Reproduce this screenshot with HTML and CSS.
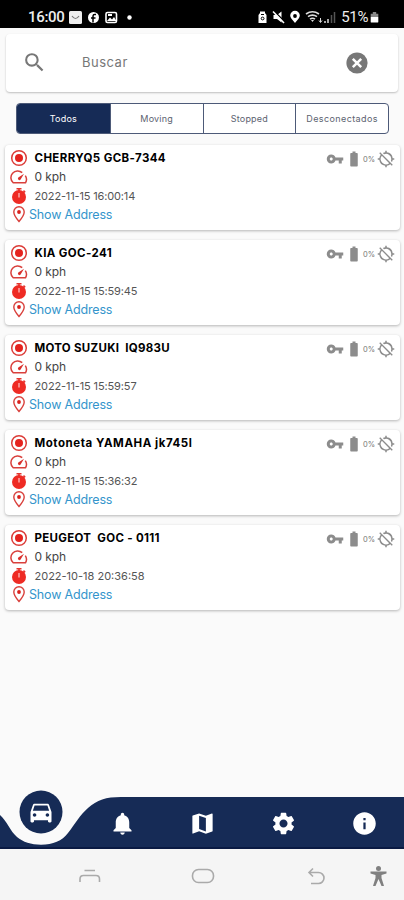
FILE: index.html
```
<!DOCTYPE html>
<html lang="es">
<head>
<meta charset="utf-8">
<title>Vehículos</title>
<link rel="stylesheet" href="styles.css">
</head>
<body>
<svg class="defs" width="0" height="0" aria-hidden="true">
  <symbol id="target" viewBox="0 0 18 18"><circle cx="9" cy="9" r="7.300" fill="none" stroke="#dc3d39" stroke-width="1.500"/><circle cx="9" cy="9" r="4" fill="#e5231e"/></symbol>
  <symbol id="speed" viewBox="0 0 18 18"><path d="M12.200 4.600A6.800 6.800 0 0 0 3.200 14.800H15.500A6.800 6.800 0 0 0 15.300 7.600" fill="none" stroke="#d9403c" stroke-width="1.500" stroke-linejoin="round"/><path d="M14 5.800 10.600 11.600a1.500 1.500 0 1 1-2.300-2z" fill="#d9302c"/></symbol>
  <symbol id="timer" viewBox="0 0 18 18"><path d="M6.500 1h5v1.600h-5zM8.200 2h1.600v2H8.200zM14 3l1.700 1.700-1.200 1.200-1.600-1.600z" fill="#e5352f"/><circle cx="9" cy="10" r="7" fill="#ee2b24"/><path d="M9 6v4.500" stroke="#fbb" stroke-width="1.300"/></symbol>
  <symbol id="pin" viewBox="0 0 18 18"><path d="M9 16.500C6 13 3.800 10 3.800 7a5.200 5.200 0 0 1 10.400 0c0 3-2.200 6-5.200 9.500z" fill="none" stroke="#d9403c" stroke-width="1.400"/><circle cx="9" cy="7" r="1.900" fill="#d9201c"/></symbol>
  <symbol id="key" viewBox="0 0 24 24"><path d="M12.650 10C11.830 7.670 9.610 6 7 6c-3.310 0-6 2.690-6 6s2.690 6 6 6c2.610 0 4.830-1.670 5.650-4H17v4h4v-4h2v-4H12.650zM7 14c-1.100 0-2-.9-2-2s.9-2 2-2 2 .9 2 2-.9 2-2 2z"/></symbol>
  <symbol id="battery" viewBox="0 0 24 24"><path d="M15.670 4H14V2h-4v2H8.330C7.600 4 7 4.600 7 5.330v15.330C7 21.400 7.600 22 8.330 22h7.330c.74 0 1.340-.6 1.340-1.330V5.330C17 4.600 16.400 4 15.670 4z"/></symbol>
  <symbol id="nogps" viewBox="0 0 24 24"><path d="M20.940 11A8.994 8.994 0 0 0 13 3.060V1h-2v2.060c-1.130.12-2.190.46-3.160.97l1.500 1.500A6.995 6.995 0 0 1 19 12c0 .94-.19 1.840-.52 2.650l1.500 1.500c.5-.96.840-2.020.97-3.150H23v-2h-2.060zM3 4.270l2.040 2.040A8.914 8.914 0 0 0 3.060 11H1v2h2.060A8.994 8.994 0 0 0 11 20.940V23h2v-2.060c1.770-.2 3.380-.91 4.690-1.980L19.730 21 21 19.730 4.270 3 3 4.270zm13.270 13.270A6.995 6.995 0 0 1 6.460 7.730l9.810 9.810z"/></symbol>
</svg>

<header class="status">
  <span class="clock">16:00</span>
  <svg class="status-left" width="70" height="16" viewBox="0 0 70 16">
    <rect x="1" y="2" width="13" height="13" rx="1.500" fill="#eee"/><path d="M4 7q3.500 5 7 0" fill="none" stroke="#777" stroke-width="1.200"/>
    <circle cx="25.500" cy="8.500" r="5.500" fill="#fff"/><path d="M28 5.500q-3-.6-3 2v6M23 9h4.500" fill="none" stroke="#000" stroke-width="1.500"/>
    <rect x="38" y="3.500" width="10.500" height="10" rx="1.500" fill="none" stroke="#fff" stroke-width="1.600"/><path d="M39 12l3-3.500 2 2 2-2.500 2.500 4zM40 5h4v2h-4z" fill="#fff"/>
    <circle cx="61.500" cy="8.500" r="2.200" fill="#fff"/>
  </svg>
  <svg class="status-right" width="80" height="16" viewBox="0 0 80 16">
    <path d="M1.500 6 3 4V2.500h5V4l1.500 2V14h-8z" fill="#fff"/><path d="M4 5.500h3M4.200 9.500a1.400 1.400 0 1 0 2.800 0 1.400 1.400 0 0 0-2.800 0" fill="none" stroke="#000"/>
    <path d="M16.500 6h3.500l4.500-3.500v11L20 10h-3.500z" fill="#fff"/><path d="M17 2l11 11" stroke="#000" stroke-width="1.500"/><path d="M16 2.500l11 11.500" stroke="#fff" stroke-width="1.600"/>
    <path d="M38 14c-3-3.500-4.800-5.200-4.800-7.400a4.800 4.800 0 0 1 9.600 0C42.800 8.800 41 10.500 38 14z" fill="#fff"/><circle cx="38" cy="7" r="1.900" fill="#000"/>
    <path d="M49 5q6.500-4.500 13 0M51 7.700q4.500-3.200 9 0M53 10.200q2.500-2 5 0" fill="none" stroke="#ddd" stroke-width="1.600"/><path d="M54 11h3l-1.500 2z" fill="#ddd"/>
    <path d="M63.500 9v4M62 11.500l1.500 2 1.500-2" stroke="#ddd" fill="none"/><path d="M68 12v2M71 10v4" stroke="#ddd" stroke-width="1.500"/><path d="M74.500 6v8M77.500 3v11" stroke="#555" stroke-width="1.500"/>
  </svg>
  <span class="percent">51%</span>
  <svg class="status-batt" width="9" height="11" viewBox="0 0 9 13"><path d="M2.500 0h4v2H9v4H0V2h2.500z" fill="#888"/><path d="M0 6h9v5.500a1 1 0 0 1-1 1H1a1 1 0 0 1-1-1z" fill="#fff"/></svg>
</header>

<main>
  <section class="search">
    <svg class="search-icon" width="25" height="25" viewBox="0 0 24 24"><path fill="#777" d="M15.500 14h-.79l-.28-.27A6.471 6.471 0 0 0 16 9.500 6.500 6.500 0 1 0 9.500 16c1.610 0 3.090-.59 4.230-1.570l.27.28v.79l5 4.990L20.490 19l-4.990-5zm-6 0C7.010 14 5 11.990 5 9.500S7.010 5 9.500 5 14 7.010 14 9.500 11.990 14 9.500 14z"/></svg>
    <span class="placeholder">Buscar</span>
    <svg class="clear" width="22" height="22" viewBox="0 0 22 22"><circle cx="11" cy="11" r="10.600" fill="#777"/><path d="M6.800 6.800l8.400 8.400M15.200 6.800l-8.400 8.400" stroke="#fff" stroke-width="2.500"/></svg>
  </section>

  <nav class="tabs">
    <span class="tab active">Todos</span><span class="tab">Moving</span><span class="tab">Stopped</span><span class="tab long">Desconectados</span>
  </nav>

  <section class="list">
    <article class="card">
      <div class="info">
        <div class="row name n1"><svg><use href="#target"/></svg><b>CHERRYQ5 GCB-7344</b></div>
        <div class="row kph"><svg><use href="#speed"/></svg><span>0 kph</span></div>
        <div class="row date"><svg><use href="#timer"/></svg><span>2022-11-15 16:00:14</span></div>
        <div class="row addr"><svg><use href="#pin"/></svg><a>Show Address</a></div>
      </div>
      <div class="state"><svg class="key"><use href="#key"/></svg><svg class="battery"><use href="#battery"/></svg><span>0%</span><svg class="gps"><use href="#nogps"/></svg></div>
    </article>
    <article class="card">
      <div class="info">
        <div class="row name n2"><svg><use href="#target"/></svg><b>KIA GOC-241</b></div>
        <div class="row kph"><svg><use href="#speed"/></svg><span>0 kph</span></div>
        <div class="row date d2"><svg><use href="#timer"/></svg><span>2022-11-15 15:59:45</span></div>
        <div class="row addr"><svg><use href="#pin"/></svg><a>Show Address</a></div>
      </div>
      <div class="state"><svg class="key"><use href="#key"/></svg><svg class="battery"><use href="#battery"/></svg><span>0%</span><svg class="gps"><use href="#nogps"/></svg></div>
    </article>
    <article class="card">
      <div class="info">
        <div class="row name n3"><svg><use href="#target"/></svg><b>MOTO SUZUKI  IQ983U</b></div>
        <div class="row kph"><svg><use href="#speed"/></svg><span>0 kph</span></div>
        <div class="row date d2"><svg><use href="#timer"/></svg><span>2022-11-15 15:59:57</span></div>
        <div class="row addr"><svg><use href="#pin"/></svg><a>Show Address</a></div>
      </div>
      <div class="state"><svg class="key"><use href="#key"/></svg><svg class="battery"><use href="#battery"/></svg><span>0%</span><svg class="gps"><use href="#nogps"/></svg></div>
    </article>
    <article class="card">
      <div class="info">
        <div class="row name n4"><svg><use href="#target"/></svg><b>Motoneta YAMAHA jk745l</b></div>
        <div class="row kph"><svg><use href="#speed"/></svg><span>0 kph</span></div>
        <div class="row date d2"><svg><use href="#timer"/></svg><span>2022-11-15 15:36:32</span></div>
        <div class="row addr"><svg><use href="#pin"/></svg><a>Show Address</a></div>
      </div>
      <div class="state"><svg class="key"><use href="#key"/></svg><svg class="battery"><use href="#battery"/></svg><span>0%</span><svg class="gps"><use href="#nogps"/></svg></div>
    </article>
    <article class="card">
      <div class="info">
        <div class="row name n5"><svg><use href="#target"/></svg><b>PEUGEOT  GOC - 0111</b></div>
        <div class="row kph"><svg><use href="#speed"/></svg><span>0 kph</span></div>
        <div class="row date d5"><svg><use href="#timer"/></svg><span>2022-10-18 20:36:58</span></div>
        <div class="row addr"><svg><use href="#pin"/></svg><a>Show Address</a></div>
      </div>
      <div class="state"><svg class="key"><use href="#key"/></svg><svg class="battery"><use href="#battery"/></svg><span>0%</span><svg class="gps"><use href="#nogps"/></svg></div>
    </article>
  </section>
</main>

<nav class="bottom">
  <svg class="wave" width="404" height="62" viewBox="0 0 404 62">
    <path d="M0 28C7 34 10 44 17 50C23 55 31 57.700 41 57.700C53 57.700 62 54 68 46C75 37 80 28 88 21C97 13 106 10 121 10H404V62H0z" fill="#162b56"/>
    <path d="M0 61H404" stroke="#0a1a43" stroke-width="2"/>
    <circle cx="41" cy="25" r="21.500" fill="#162b56"/>
  </svg>
  <div class="items">
    <span class="item lifted"><svg width="28" height="28" viewBox="0 0 24 24"><path d="M18.920 6.010C18.720 5.420 18.160 5 17.500 5h-11c-.66 0-1.210.42-1.420 1.010L3 12v8c0 .55.450 1 1 1h1c.55 0 1-.45 1-1v-1h12v1c0 .55.450 1 1 1h1c.55 0 1-.45 1-1v-8l-2.080-5.990zM6.500 16c-.83 0-1.500-.67-1.500-1.500S5.670 13 6.500 13s1.500.67 1.500 1.500S7.330 16 6.500 16zm11 0c-.83 0-1.500-.67-1.500-1.500s.67-1.500 1.500-1.500 1.500.67 1.500 1.500-.67 1.500-1.500 1.500zM5 11l1.500-4.500h11L19 11H5z"/></svg></span>
    <span class="item"><svg width="27" height="27" viewBox="0 0 24 24"><path d="M12 22c1.100 0 2-.9 2-2h-4c0 1.100.89 2 2 2zm6-6v-5c0-3.070-1.640-5.640-4.500-6.320V4c0-.83-.67-1.500-1.500-1.500s-1.500.67-1.500 1.500v.68C7.630 5.360 6 7.920 6 11v5l-2 2v1h16v-1l-2-2z"/></svg></span>
    <span class="item"><svg width="27" height="27" viewBox="0 0 24 24"><path d="M20.500 3l-.16.030L15 5.100 9 3 3.360 4.900c-.21.070-.36.250-.36.480V20.500c0 .28.220.5.500.5l.16-.03L9 18.900l6 2.100 5.640-1.900c.21-.07.360-.25.360-.48V3.500c0-.28-.22-.5-.5-.5zM15 19l-6-2.110V5l6 2.110V19z"/></svg></span>
    <span class="item"><svg width="27" height="27" viewBox="0 0 24 24"><path d="M19.140 12.940c.04-.3.060-.61.060-.94 0-.32-.02-.64-.07-.94l2.030-1.580a.49.490 0 0 0 .12-.61l-1.920-3.320a.488.488 0 0 0-.59-.22l-2.390.96c-.5-.38-1.030-.7-1.620-.94l-.36-2.540a.484.484 0 0 0-.48-.41h-3.840c-.24 0-.43.170-.47.410l-.36 2.540c-.59.240-1.130.57-1.620.94l-2.390-.96c-.22-.08-.47 0-.59.220L2.740 8.870c-.12.210-.08.470.12.610l2.030 1.580c-.05.300-.09.630-.09.940s.020.640.070.940l-2.030 1.580a.49.490 0 0 0-.12.610l1.920 3.320c.12.220.37.290.59.220l2.390-.96c.5.380 1.030.7 1.620.940l.36 2.540c.05.240.24.410.48.410h3.840c.24 0 .44-.17.470-.41l.36-2.540c.59-.24 1.130-.56 1.620-.94l2.390.96c.22.080.47 0 .59-.22l1.920-3.320c.12-.22.070-.47-.12-.61l-2.010-1.580zM12 15.600c-1.980 0-3.600-1.620-3.600-3.600s1.620-3.600 3.600-3.600 3.600 1.620 3.600 3.600-1.620 3.600-3.600 3.600z"/></svg></span>
    <span class="item"><svg width="27" height="27" viewBox="0 0 24 24"><path d="M12 2C6.480 2 2 6.480 2 12s4.480 10 10 10 10-4.480 10-10S17.520 2 12 2zm1 15h-2v-6h2v6zm0-8h-2V7h2v2z"/></svg></span>
  </div>
</nav>

<footer class="system">
  <svg width="404" height="51" viewBox="0 0 404 51" fill="none" stroke="#aaa" stroke-width="1.600">
    <path d="M84.500 21.500H95M80 33v-3q0-3.500 3.500-3.500h12.500q3.500 0 3.500 3.500v3"/>
    <rect x="192.500" y="20.500" width="21" height="13" rx="6"/>
    <path d="M309 23.500h9.500a5 5 0 0 1 0 11H311M313 19.500l-4 4 4 4"/>
    <g fill="#808080" stroke="none"><circle cx="378.500" cy="19.500" r="2.500"/><path d="M370.500 22.500h16v2l-5 1.500v3l2.500 8h-2.500l-3-7-3 7H373l2.500-8v-3l-5-1.500z"/></g>
  </svg>
</footer>
</body>
</html>
```

FILE: styles.css
```
* { box-sizing: border-box; }
body {
  margin: 0;
  width: 404px;
  height: 900px;
  overflow: hidden;
  display: flex;
  flex-direction: column;
  background: #fafafa;
  color: #222;
  font-family: Inter, "Liberation Sans", sans-serif;
}
svg { display: block; flex: none; }
.defs { position: absolute; }

.status {
  height: 28px;
  flex: none;
  background: #000;
  color: #eee;
  display: flex;
  align-items: center;
  padding: 6px 25px 0 28px;
  font-family: Roboto, sans-serif;
  font-size: 15px;
}
.clock { width: 40px; font-weight: 500; letter-spacing: -.3px; }
.status-right { margin-left: auto; }
.percent { margin-left: 4px; letter-spacing: -.4px; }
.status-batt { margin-left: 2px; }

main { flex: 1; }
.search {
  height: 58px;
  margin: 6px 6px 0;
  display: flex;
  align-items: center;
  padding: 0 30px 0 16px;
  background: #fff;
  border-radius: 4px;
  box-shadow: 0 1px 2px #0000003d;
}
.search-icon { margin-top: -2px; }
.placeholder { margin-left: 35px; font-size: 13px; color: #777; letter-spacing: .5px; margin-top: -2px; }
.clear { margin-left: auto; }

.tabs {
  height: 31px;
  margin: 11px 15px 0 16px;
  display: grid;
  grid-template-columns: repeat(4, 1fr);
  border: 1px solid #4d5a78;
  border-radius: 4px;
  overflow: hidden;
  background: #fff;
}
.tab {
  display: flex;
  align-items: center;
  justify-content: center;
  font-size: 9px;
  letter-spacing: .2px;
  color: #5c6270;
}
.tab + .tab { border-left: 1px solid #4d5a78; }
.tab.active { background: #162b56; color: #fff; }
.tab.long { letter-spacing: .4px; }

.list { display: flex; flex-direction: column; gap: 10px; padding: 11px 4px 0 5px; }
.card {
  height: 85px;
  display: flex;
  justify-content: space-between;
  background: #fff;
  border-radius: 4px;
  box-shadow: 0 1px 3px #00000047;
  padding: 3px 5px 0 5px;
}
.row { height: 19px; display: flex; align-items: center; white-space: pre; }
.row svg { width: 18px; height: 18px; margin-right: 6.5px; }
.name { font-size: 11.5px; color: #000; }
.n1, .n2 { letter-spacing: .38px; }
.n3 { letter-spacing: .28px; }
.n4 { letter-spacing: .54px; }
.n5 { letter-spacing: .3px; }
.kph { font-size: 12px; color: #444; letter-spacing: -.1px; }
.date { font-size: 11px; color: #555; letter-spacing: -.15px; }
.d2 { letter-spacing: -.12px; }
.d5 { letter-spacing: 0; }
.addr { font-size: 12.5px; color: #3495cc; height: 18px; letter-spacing: -.17px; }
.addr svg { margin-right: 1px; }
.state { display: flex; align-items: center; height: 22px; color: #777; fill: #8c8c8c; font-size: 7.5px; }
.key { width: 18px; height: 18px; margin-right: 1px; }
.battery { width: 18px; height: 18px; }
.state span { width: 14px; letter-spacing: -.1px; white-space: nowrap; }
.gps { width: 18px; height: 18px; }

.bottom { height: 62px; flex: none; position: relative; }
.wave { position: absolute; left: 0; top: 0; }
.items { position: relative; display: grid; grid-template-columns: repeat(5, 1fr); height: 62px; fill: #fff; padding-left: 1px; margin-right: -1px; }
.item { display: flex; justify-content: center; padding-top: 23px; }
.item.lifted { padding-top: 11px; }
.system { height: 51px; flex: none; background: #f5f5f5; }
```
